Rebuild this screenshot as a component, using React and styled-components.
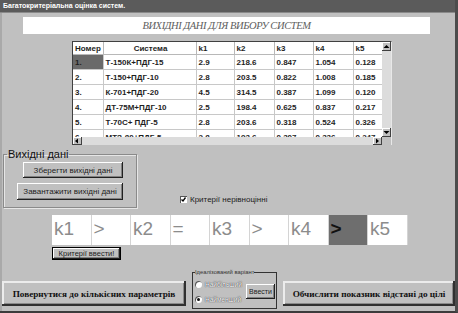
import React from 'react'
import styled, { createGlobalStyle } from 'styled-components'

const GlobalStyle = createGlobalStyle`
  html, body {
    margin: 0;
    padding: 0;
    background: #c0c0c0;
  }
  body {
    font-family: "Liberation Sans", Arial, sans-serif;
  }
`

const rows = [
  ['1.', 'Т-150К+ПДГ-15', '2.9', '218.6', '0.847', '1.054', '0.128'],
  ['2.', 'Т-150+ПДГ-10', '2.8', '203.5', '0.822', '1.008', '0.185'],
  ['3.', 'К-701+ПДГ-20', '4.5', '314.5', '0.387', '1.099', '0.120'],
  ['4.', 'ДТ-75М+ПДГ-10', '2.5', '198.4', '0.625', '0.837', '0.217'],
  ['5.', 'Т-70С+ ПДГ-5', '2.8', '203.6', '0.318', '0.524', '0.326'],
  ['6.', 'МТЗ-80+ПДГ-5', '2.8', '193.6', '0.307', '0.336', '0.247'],
]

const colWidths = [30, 93, 38, 40, 39, 40, 31]

const criteria = [
  { t: 'k1' }, { t: '>' }, { t: 'k2' }, { t: '=' }, { t: 'k3' },
  { t: '>' }, { t: 'k4' }, { t: '>', active: true }, { t: 'k5' },
]

const Window = styled.div`
  width: 458px;
  height: 313px;
  box-sizing: border-box;
  display: flex;
  flex-direction: column;
  background: #c0c0c0;
  border-right: 3px solid #4c4c4c;
  border-bottom: 2px solid #3c3c3c;
  overflow: hidden;
`

const TitleBar = styled.div`
  height: 12px;
  flex: none;
  background: #5b5b5b;
  color: #fff;
  font-size: 7px;
  font-weight: bold;
  line-height: 12px;
  padding-left: 3px;
  border-bottom: 1px solid #8a8a8a;
`

const Body = styled.div`
  flex: 1;
  display: flex;
  flex-direction: column;
  border-left: 2px solid #a9a9a9;
`

const Heading = styled.div`
  margin: 4px 0 0 21px;
  width: 407px;
  height: 17px;
  background: #fff;
  color: #5e5e5e;
  font-family: "Liberation Serif", "Times New Roman", serif;
  font-style: italic;
  font-size: 10.5px;
  line-height: 17px;
  text-align: center;
  letter-spacing: -0.4px;
`

const TableFrame = styled.div`
  margin: 7px 0 0 70px;
  width: 320px;
  height: 104px;
  box-sizing: border-box;
  border-top: 1px solid #404040;
  border-left: 1px solid #404040;
  border-right: 1px solid #e8e8e8;
  display: grid;
  grid-template-columns: 1fr 9px;
  grid-template-rows: 1fr 8px;
  background: #fff;
`

const TableViewport = styled.div`
  overflow: hidden;
`

const Grid = styled.table`
  border-collapse: collapse;
  table-layout: fixed;
  width: ${colWidths.reduce((a, b) => a + b, 0)}px;
  font-size: 8px;
  font-weight: bold;
  color: #1e1e1e;
`

const HeadCell = styled.th`
  height: 12px;
  padding: 0 0 0 2px;
  text-align: ${p => (p.$center ? 'center' : 'left')};
  font-weight: bold;
  border-right: 1px solid #b8b8b8;
  border-bottom: 1px solid #b8b8b8;
  white-space: nowrap;
  overflow: hidden;
`

const Cell = styled.td`
  height: 14px;
  padding: 0 0 0 2px;
  border-right: 1px solid #c8c8c8;
  border-bottom: 1px solid #c8c8c8;
  background: ${p => (p.$selected ? '#6a6a6a' : '#fff')};
  white-space: nowrap;
  overflow: hidden;
`

const ScrollTrack = styled.div`
  background: #dcdcdc;
  display: flex;
  flex-direction: ${p => (p.$vertical ? 'column' : 'row')};
  justify-content: space-between;
`

const ScrollArrow = styled.div`
  width: 9px;
  height: ${p => (p.$vertical ? '9px' : '8px')};
  box-sizing: border-box;
  background: #c0c0c0;
  box-shadow: inset -1px -1px 0 #404040, inset 1px 1px 0 #fff;
  display: flex;
  align-items: center;
  justify-content: center;
`

const Corner = styled.div`
  background: #c0c0c0;
`

const Middle = styled.div`
  display: flex;
  align-items: flex-end;
  margin-top: 3px;
  height: 60px;
`

const Group = styled.fieldset`
  margin: 0 0 0 1px;
  padding: 1px 13px 6px 3px;
  width: 134px;
  height: 60px;
  box-sizing: border-box;
  border: 1px solid #8a8a8a;
  box-shadow: inset 1px 1px 0 #e6e6e6, 1px 1px 0 #e6e6e6;
  display: flex;
  flex-direction: column;
  align-items: flex-end;
  gap: 5px;
`

const GroupLabel = styled.legend`
  padding: 0 1px;
  font-size: 11px;
  line-height: 13px;
  color: #111;
`

const WinButton = styled.button`
  font-family: "Liberation Sans", Arial, sans-serif;
  font-size: ${p => p.$size || 8}px;
  color: #222;
  background: #c0c0c0;
  border: ${p => (p.$default ? '1px solid #000' : 'none')};
  box-shadow: inset -1px -1px 0 #202020, inset 1px 1px 0 #fff, inset -2px -2px 0 #808080;
  padding: 0 3px;
  width: ${p => p.$w}px;
  height: ${p => p.$h}px;
  flex: none;
  white-space: nowrap;
  cursor: default;
`

const BigButton = styled(WinButton)`
  font-family: "Liberation Serif", "Times New Roman", serif;
  font-weight: bold;
  font-size: 9.2px;
  color: #111;
  margin-bottom: 3px;
  box-shadow: inset -2px -2px 0 #303030, inset 2px 2px 0 #ececec, inset -3px -3px 0 #8a8a8a;
`

const CheckRow = styled.label`
  display: flex;
  align-items: center;
  gap: 3px;
  margin: 0 0 4px 43px;
  font-size: 8px;
  color: #222;
`

const CheckBox = styled.span`
  width: 7px;
  height: 7px;
  background: #fff;
  box-shadow: inset 1px 1px 0 #555;
  display: flex;
  align-items: center;
  justify-content: center;
`

const Strip = styled.div`
  margin: 7px 0 0 50px;
  display: grid;
  grid-template-columns: repeat(9, 39.5px);
  height: 30px;
`

const StripCell = styled.div`
  background: ${p => (p.$active ? '#6e6e6e' : '#fff')};
  color: ${p => (p.$active ? '#111' : '#8c8c8c')};
  font-weight: ${p => (p.$active ? 'bold' : 'normal')};
  border-right: 1px solid #d4d4d4;
  font-size: 19px;
  line-height: 28px;
  padding-left: 2px;
`

const StripButton = styled.div`
  display: flex;
  margin: 2px 0 0 50px;
`

const Bottom = styled.div`
  margin-top: 9px;
  display: flex;
  align-items: flex-end;
  gap: 6px;
`

const Ideal = styled.fieldset`
  margin: 0;
  padding: 0 1px 1px 2px;
  width: 87px;
  height: 40px;
  box-sizing: border-box;
  border: 1px solid #333;
  display: flex;
  align-items: center;
  justify-content: space-between;
`

const IdealLabel = styled.legend`
  padding: 0;
  font-size: 5.8px;
  line-height: 7px;
  color: #333;
  white-space: nowrap;
`

const Radios = styled.div`
  display: flex;
  flex-direction: column;
  gap: 8px;
`

const RadioRow = styled.label`
  display: flex;
  align-items: center;
  gap: 3px;
  font-size: 6.5px;
  color: #ffffff;
  text-shadow: 0 0 1px #3a3a3a, 0 0 1px #3a3a3a;
  white-space: nowrap;
`

const RadioDot = styled.span`
  width: 7px;
  height: 7px;
  flex: none;
  border-radius: 50%;
  background: #fff;
  box-shadow: inset 1px 1px 0 #555;
  display: flex;
  align-items: center;
  justify-content: center;
  &::after {
    content: '';
    width: 3px;
    height: 3px;
    border-radius: 50%;
    background: ${p => (p.$on ? '#111' : 'transparent')};
  }
`

const Arrow = ({ dir }) => {
  const pts = {
    up: '1.5,5 4.5,2 7.5,5',
    down: '1.5,2 4.5,5 7.5,2',
    left: '5,1.5 2,4 5,6.5',
    right: '3,1.5 6,4 3,6.5',
  }
  return (
    <svg width="9" height="8" viewBox="0 0 9 8">
      <polygon points={pts[dir]} fill="#000" />
    </svg>
  )
}

export default function App() {
  return (
    <Window>
      <GlobalStyle />
      <TitleBar>Багатокритеріальна оцінка систем.</TitleBar>
      <Body>
        <Heading>ВИХІДНІ ДАНІ ДЛЯ ВИБОРУ СИСТЕМ</Heading>

        <TableFrame>
          <TableViewport>
            <Grid>
              <colgroup>
                {colWidths.map((w, i) => <col key={i} style={{ width: w }} />)}
              </colgroup>
              <thead>
                <tr>
                  <HeadCell>Номер</HeadCell>
                  <HeadCell $center>Система</HeadCell>
                  <HeadCell>k1</HeadCell>
                  <HeadCell>k2</HeadCell>
                  <HeadCell>k3</HeadCell>
                  <HeadCell>k4</HeadCell>
                  <HeadCell>k5</HeadCell>
                </tr>
              </thead>
              <tbody>
                {rows.map((r, i) => (
                  <tr key={i}>
                    {r.map((c, j) => (
                      <Cell key={j} $selected={i === 0 && j === 0}>{c}</Cell>
                    ))}
                  </tr>
                ))}
              </tbody>
            </Grid>
          </TableViewport>
          <ScrollTrack $vertical>
            <ScrollArrow $vertical><Arrow dir="up" /></ScrollArrow>
            <ScrollArrow $vertical><Arrow dir="down" /></ScrollArrow>
          </ScrollTrack>
          <ScrollTrack>
            <ScrollArrow><Arrow dir="left" /></ScrollArrow>
            <ScrollArrow><Arrow dir="right" /></ScrollArrow>
          </ScrollTrack>
          <Corner />
        </TableFrame>

        <Middle>
          <Group>
            <GroupLabel>Вихідні дані</GroupLabel>
            <WinButton $w={100} $h={16}>Зберегти вихідні дані</WinButton>
            <WinButton $w={106} $h={17}>Завантажити вихідні дані</WinButton>
          </Group>
          <CheckRow>
            <CheckBox>
              <svg width="7" height="7" viewBox="0 0 7 7">
                <polyline points="1.5,3.5 3,5 5.5,1.5" fill="none" stroke="#000" strokeWidth="1.3" />
              </svg>
            </CheckBox>
            Критерії нерівноцінні
          </CheckRow>
        </Middle>

        <Strip>
          {criteria.map((c, i) => (
            <StripCell key={i} $active={c.active}>{c.t}</StripCell>
          ))}
        </Strip>
        <StripButton>
          <WinButton $default $w={69} $h={13} $size={7.5}>Критерії ввести!</WinButton>
        </StripButton>

        <Bottom>
          <BigButton $w={184} $h={25}>Повернутися до кількісних параметрів</BigButton>
          <Ideal>
            <IdealLabel>Ідеалізований варіант</IdealLabel>
            <Radios>
              <RadioRow><RadioDot />Найбільший</RadioRow>
              <RadioRow><RadioDot $on />Найменший</RadioRow>
            </Radios>
            <WinButton $w={29} $h={15} $size={7}>Ввести</WinButton>
          </Ideal>
          <BigButton $w={172} $h={25}>Обчислити показник відстані до цілі</BigButton>
        </Bottom>
      </Body>
    </Window>
  )
}
